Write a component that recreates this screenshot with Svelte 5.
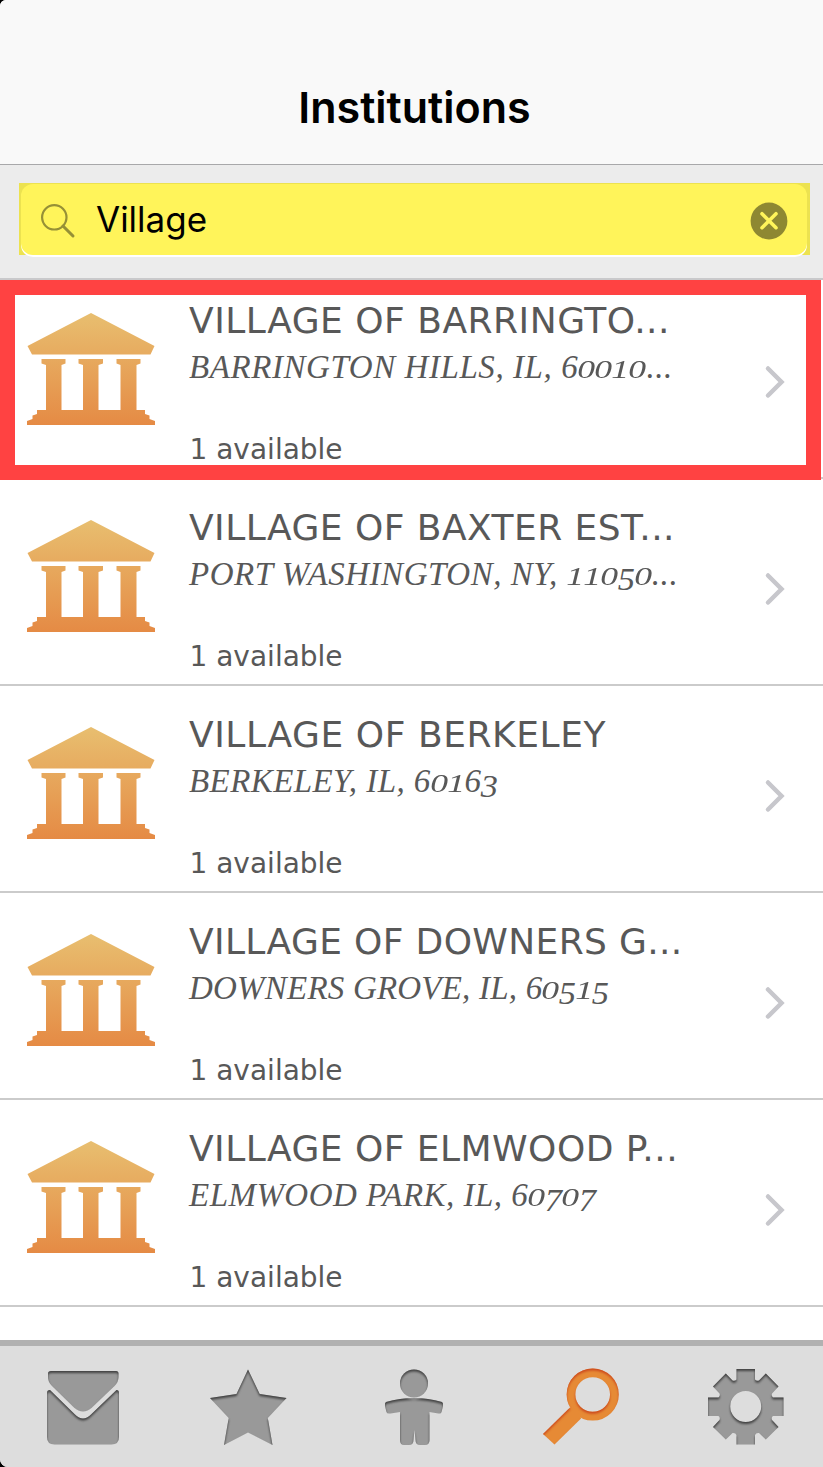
<script lang="ts">
  // Institutions search screen: header, search field, result list and tab bar.
  type Institution = {
    name: string;
    address: string;
    available: number;
    nameSpacing: number;
    addressSpacing: number;
  };

  const institutions: Institution[] = [
    { name: 'VILLAGE OF BARRINGTO...', address: 'BARRINGTON HILLS, IL, 60010...', available: 1, nameSpacing: 0.5, addressSpacing: 0.56 },
    { name: 'VILLAGE OF BAXTER EST...', address: 'PORT WASHINGTON, NY, 11050...', available: 1, nameSpacing: 0.46, addressSpacing: 0.52 },
    { name: 'VILLAGE OF BERKELEY', address: 'BERKELEY, IL, 60163', available: 1, nameSpacing: 0.56, addressSpacing: 0.42 },
    { name: 'VILLAGE OF DOWNERS G...', address: 'DOWNERS GROVE, IL, 60515', available: 1, nameSpacing: 0.35, addressSpacing: 0.2 },
    { name: 'VILLAGE OF ELMWOOD P...', address: 'ELMWOOD PARK, IL, 60707', available: 1, nameSpacing: 0.46, addressSpacing: 0.46 },
  ];

  let query = $state('Village');
  let selected = $state(0);
  let activeTab = $state('search');

  const tabs = ['mail', 'favorites', 'profile', 'search', 'settings'];

  // Old-style numerals: 0-2 sit at x-height, 3 4 5 7 9 hang below the baseline.
  function digitClass(c: string): string {
    if ('012'.includes(c)) return 'small';
    if ('34579'.includes(c)) return 'low';
    return '';
  }
</script>

<div class="screen">
  <div class="page">
    <header><h1>Institutions</h1></header>

    <div class="search">
      <div class="marker">
        <div class="field">
          <svg class="glass" width="36" height="36" viewBox="0 0 36 36">
            <circle cx="14.3" cy="14.3" r="12.2" />
            <path d="M23 23l10 10" stroke-width="3" stroke-linecap="round" />
          </svg>
          <span class="query">{query}</span>
          <svg class="clear" width="38" height="38" viewBox="0 0 38 38" role="button" tabindex="-1" aria-label="Clear">
            <circle cx="19" cy="19" r="18.4" fill="#8e8832" />
            <path d="M12 11.700l14 14M26 11.700L12 25.700" stroke="#fff45a" stroke-width="3.6" stroke-linecap="round" />
          </svg>
        </div>
      </div>
    </div>

    <main>
      {#each institutions as item, i}
        <div class="row" class:first={i === 0}>
          <svg class="bank" width="130" height="114" viewBox="0 0 130 114">
            <defs>
              <linearGradient id="bank-{i}" x1="0" y1="0" x2="0" y2="114" gradientUnits="userSpaceOnUse">
                <stop offset="0" stop-color="#e8bf70" />
                <stop offset="1" stop-color="#e58a44" />
              </linearGradient>
            </defs>
            <path
              fill="url(#bank-{i})"
              d="M65 1L128.500 34L124.500 42.500H6L1.500 34ZM15.500 47H39.500V51.500L35.500 53V98H57V53L52.500 51.500V47H77V51.500L72.500 53V98H94.500V53L90.500 51.500V47H114.500V51.500L110.500 53V98H119V102L123.500 103.500V107L129 109V113H1V109L6.500 107V103.500L11 102V98H20V53L15.500 51.500Z"
            />
          </svg>
          <div class="info">
            <h2 style="letter-spacing: {item.nameSpacing}px">{item.name}</h2>
            <p class="address" style="letter-spacing: {item.addressSpacing}px">
              {#each item.address as c}{#if /\d/.test(c)}<span class="digit {digitClass(c)}">{c}</span>{:else}{c}{/if}{/each}
            </p>
            <p class="count">{item.available} available</p>
          </div>
          <svg class="chevron" width="22" height="34" viewBox="0 0 22 34">
            <path d="M4 3.500L17.500 17L4 30.500" />
          </svg>
          {#if i === selected}
            <div class="highlight"></div>
          {/if}
        </div>
      {/each}
    </main>

    <nav>
      {#each tabs as tab}
        <button class:active={tab === activeTab} aria-label={tab} onclick={() => (activeTab = tab)}>
          <svg width="80" height="80" viewBox="0 0 80 80">
            <defs>
              <filter id="inset-{tab}" x="-15%" y="-15%" width="130%" height="130%" color-interpolation-filters="sRGB">
                <feOffset in="SourceAlpha" dy="2.200" result="moved" />
                <feGaussianBlur in="moved" stdDeviation="0.8" result="soft" />
                <feComposite in="SourceAlpha" in2="soft" operator="out" result="edge" />
                <feFlood flood-color={tab === activeTab ? '#c8401a' : '#333'} flood-opacity="0.85" />
                <feComposite in2="edge" operator="in" result="shade" />
                <feMerge>
                  <feMergeNode in="SourceGraphic" />
                  <feMergeNode in="shade" />
                </feMerge>
              </filter>
            </defs>
            <g filter="url(#inset-{tab})">
              {#if tab === 'mail'}
                <path d="M8 3H73Q75.500 3 75.500 5.500V9Q75.500 14 71.500 18L49 39.500Q40 47.500 31 39.500L9 18Q5 14 5 9V5.500Q5 3 8 3Z" />
                <path d="M7 22L32 46.500Q40 54.500 48 46.500L73.500 22Q76 22 76 25V69Q76 76.500 68.500 76.500H11.500Q4 76.500 4 69V25Q4 22 7 22Z" />
              {:else if tab === 'favorites'}
                <path d="M40 1.500L51.700 26L78.500 30L59.800 50L64.500 77L40 64.500L16 77L20.700 50L2 30L28.500 26Z" />
              {:else if tab === 'profile'}
                <circle cx="40" cy="15.500" r="14" />
                <path d="M12 34Q40 26 68 34Q69.500 35 69 38L67.500 44Q67 46 64.500 45.500L55.500 44V72Q55.500 77 51 77H46Q41.500 77 41.500 72L40.500 62L39.500 72Q39.500 77 35 77H30Q26 77 26 72V44L16.500 45.500Q13 46 12.500 44L11 38Q10.500 35 12 34Z" />
              {:else if tab === 'search'}
                <circle class="ring" cx="52.700" cy="26.500" r="21.700" />
                <path d="M30 39.500L3 66L14.500 76.500L41 50.500L40 47L34 40Z" />
              {:else}
                <path
                  fill-rule="evenodd"
                  d="M31.500 1H50V11.500Q51.500 13.500 54 12.500L60.800 5.500L73.500 18.500L67 25.500Q66 28 68 29.500H78.500V48H68Q66 49.500 67 52L73.500 59L60.800 71.500L54 65Q51 64.500 50 67V76.500H31.500V67Q30.500 64.500 27.500 65L20.800 71.500L8 59L14.500 52Q15.500 49.500 13.500 48H3V29.500H13.500Q15.500 28 14.500 25.500L8 18.500L20.800 5.500L27.500 12.500Q30 13.500 31.500 11.500ZM40.700 23A15.500 15.500 0 1 0 40.700 54A15.500 15.500 0 1 0 40.700 23Z"
                />
              {/if}
            </g>
          </svg>
        </button>
      {/each}
    </nav>
  </div>
</div>

<style>
  :global(body) { margin: 0; }

  .screen { width: 823px; height: 1467px; background: #000; overflow: hidden; }

  .page {
    display: flex;
    flex-direction: column;
    height: 100%;
    background: #fff;
    border-radius: 6px 0 0 8px;
    overflow: hidden;
  }

  header {
    box-sizing: border-box;
    height: 165px;
    flex-shrink: 0;
    padding: 81px 0 0 6px;
    background: #f9f9f9;
    border-bottom: 1px solid #a8a8aa;
    text-align: center;
  }

  h1 {
    margin: 0;
    font: 600 43px/52px Inter, sans-serif;
    color: #000;
  }

  .search {
    box-sizing: border-box;
    height: 115px;
    flex-shrink: 0;
    padding: 18px 13px 0 19px;
    background: #ececec;
    border-bottom: 2px solid #c9c9cb;
  }

  .marker {
    box-sizing: border-box;
    height: 72px;
    padding: 1px 3px 0 2px;
    background: #ece250;
  }

  .field {
    display: flex;
    align-items: center;
    height: 71px;
    box-sizing: border-box;
    padding: 2px 19.5px 0 19px;
    background: #fff45a;
    border-radius: 12px;
    box-shadow: 0 2px 0 #fff;
    clip-path: inset(0 0 -2px);
  }

  .glass { fill: none; stroke: #969036; stroke-width: 2.2; }

  .query {
    flex: 1;
    padding: 0 0 3px 20px;
    font: 400 35px/44px Inter, sans-serif;
    color: #000;
  }

  main { flex: 1; min-height: 0; overflow: hidden; }

  .row {
    position: relative;
    box-sizing: border-box;
    display: flex;
    height: 207px;
    padding-left: 26px;
    border-bottom: 2px solid #cbcbcb;
  }
  .row.first { margin-top: -8px; }

  .bank { margin-top: 40px; flex-shrink: 0; }

  .info {
    width: 560px;
    padding: 27px 0 0 33px;
    color: #585858;
    white-space: nowrap;
  }

  h2 { margin: 0; font: 400 36px/44px 'DejaVu Sans', Verdana, sans-serif; }

  p { margin: 0; }

  .address {
    height: 47px;
    font: italic 400 33px/48px 'Liberation Serif', Georgia, serif;
  }

  .digit { display: inline-block; transform-origin: 50% 73%; }
  .small { transform: scale(1.08, 0.77); }
  .low { transform: translateY(5px) scale(1.04, 0.98); }

  .count {
    margin-top: 41px;
    padding-left: 0.5px;
    font: 400 28px/37px 'DejaVu Sans', Verdana, sans-serif;
  }

  .chevron {
    margin: 93px 0 0 15px;
    fill: none;
    stroke: #c7c7cc;
    stroke-width: 4.5;
    stroke-linecap: round;
  }

  .highlight {
    position: absolute;
    left: 0;
    top: 8px;
    width: 821px;
    height: 200px;
    box-sizing: border-box;
    border: 15px solid #ff4242;
    z-index: 1;
  }

  nav {
    box-sizing: border-box;
    display: flex;
    width: 828px;
    height: 127px;
    flex-shrink: 0;
    border-top: 6px solid #b1b1b1;
    background: #ddd;
  }

  button {
    flex: 1;
    padding: 22px 0 0;
    border: 0;
    background: none;
    fill: #999;
    line-height: 0;
    display: flex;
    justify-content: center;
  }
  button.active { fill: #e68a35; }

  .ring { fill: none; stroke: #e68a35; stroke-width: 8.7; }
</style>
